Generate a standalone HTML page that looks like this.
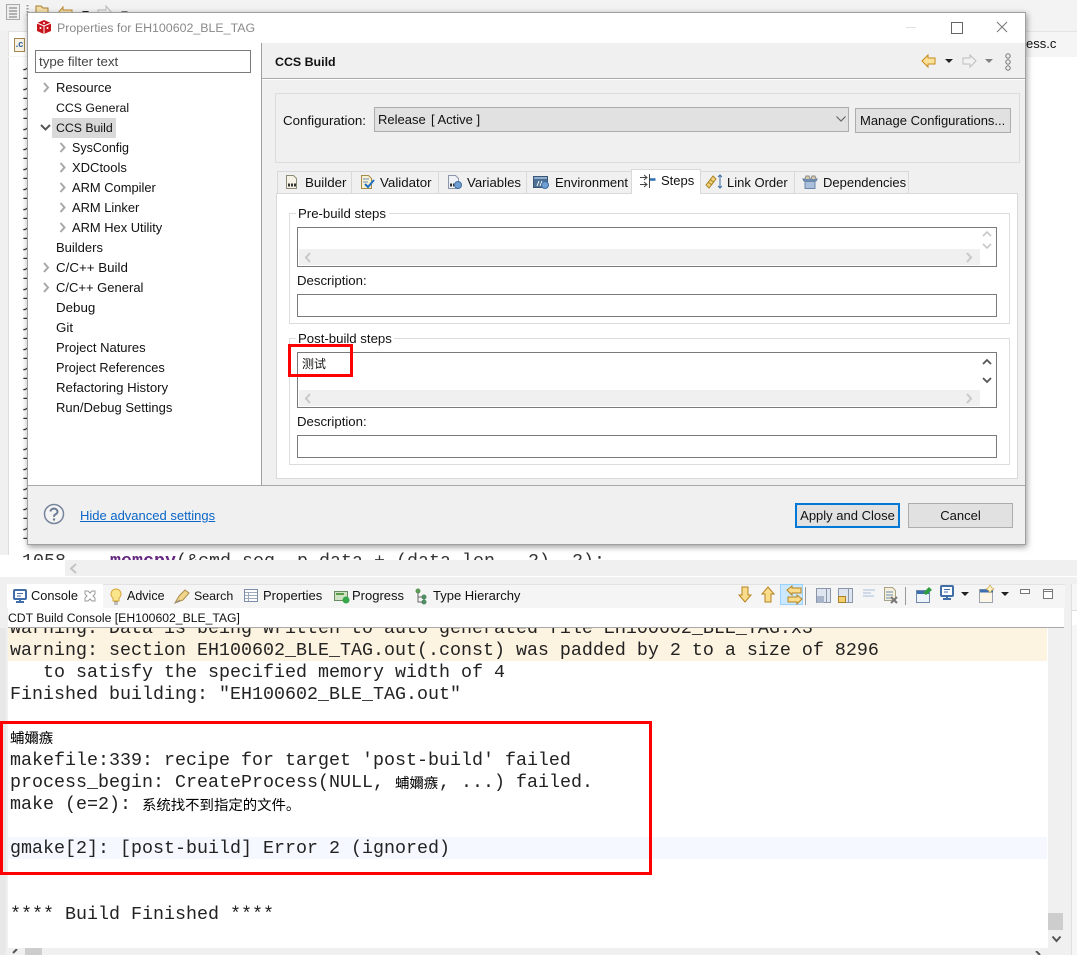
<!DOCTYPE html>
<html><head><meta charset="utf-8"><style>
html,body{margin:0;padding:0;width:1077px;height:955px;overflow:hidden;background:#fff}
body{position:relative;font-family:"Liberation Sans","Noto Sans CJK SC",sans-serif;font-size:13px;color:#111}
div,span.t,svg{position:absolute}
.t{position:absolute;white-space:nowrap;line-height:16px}
.box{box-sizing:border-box;background:#fff;border:1px solid #7a7a7a}
.m{position:absolute;left:10px;white-space:pre;height:22px;line-height:22px;font-family:"Liberation Mono","Noto Sans CJK SC",monospace;font-size:18.33px;color:#222}
.z{font-family:"Noto Sans CJK SC",sans-serif;font-size:14.4px;display:inline-block;color:#000;line-height:22px;vertical-align:top}
.g{background:#f0f0f0}
.tab{box-sizing:border-box;top:171px;height:22px;background:#f0f0f0;border:1px solid #d9d9d9;border-bottom:0}
.red{box-sizing:border-box;border:3px solid #f00}
</style></head><body>

<!-- background workbench -->
<div class="g" style="left:0;top:0;width:1077px;height:31px;background:#f3f3f3"></div>
<svg style="left:6px;top:4px" width="14" height="17"><rect x=".5" y=".5" width="13" height="15" fill="#eee" stroke="#aaa"/><path d="M3 4h8M3 7h8M3 10h8M3 13h8" stroke="#777"/></svg>
<svg style="left:26px;top:4px" width="4" height="14"><path d="M1.5 1v12" stroke="#999" stroke-dasharray="1.5 1.5" stroke-width="2"/></svg>
<svg style="left:33px;top:3px" width="100" height="10"><path d="M3 10V3h5l2 2h5v5" fill="#f4dfa8" stroke="#a87c2c"/><path d="M25 10l5-6v3h9v3" fill="#f7e0ae" stroke="#b98a2f"/><path d="M49 8l7 0-3.500 4z" fill="#222"/><path d="M65 10V7h8V3l6 7" fill="#f3f3f3" stroke="#bbb"/><path d="M88 8h7l-3.500 4z" fill="#777"/></svg>
<div style="left:0;top:31px;width:8px;height:524px;background:#f0f0f0;border-right:1px solid #ddd"></div>
<div style="left:8px;top:31px;width:1069px;height:25px;background:#f5f5f5;border-top:1px solid #e4e4e4"></div>
<div style="left:8px;top:31px;width:30px;height:25px;background:#fff;border:1px solid #e2e2e2;border-bottom:0;box-sizing:border-box"></div>
<div style="left:14px;top:38px;width:9px;height:12px;border:1px solid #a58a50;background:#f7f2e4;color:#2a5b9c;font:bold 9px/11px 'Liberation Sans';text-align:center">.c</div>
<span class="t" style="left:1026px;top:36px">ess.c</span>
<div style="left:22px;top:65px;width:6px;height:480px;color:#333;font:18.33px/20px 'Liberation Mono';overflow:hidden">1<br>1<br>1<br>1<br>1<br>1<br>1<br>1<br>1<br>1<br>1<br>1<br>1<br>1<br>1<br>1<br>1<br>1<br>1<br>1<br>1<br>1<br>1<br>1</div>
<div style="left:22px;top:545px;width:640px;height:15px;overflow:hidden"><div style="left:0;top:7px;white-space:pre;font:18.33px/20px 'Liberation Mono';color:#333;width:640px">1058<span style="color:#fff">    </span><b style="color:#642880">memcpy</b>(&amp;cmd_seq, p_data + (data_len - 2), 2);</div></div>
<div class="g" style="left:65px;top:560px;width:1012px;height:16px"></div>
<svg style="left:69px;top:563px" width="10" height="11"><path d="M7 1L2 5.500 7 10" fill="none" stroke="#c4c4c4" stroke-width="2"/></svg>
<div style="left:0;top:576px;width:1077px;height:7px;background:#fff;border-bottom:1px solid #e8e8e8"></div>
<div class="g" style="left:0;top:577px;width:1077px;height:378px;background:#f0f0f0"></div>

<!-- console view -->
<div style="left:7px;top:584px;width:1058px;height:24px;background:#f5f5f5;border-top:1px solid #e2e2e2"></div>
<div style="left:7px;top:584px;width:96px;height:24px;background:#fff"></div>
<div style="left:8px;top:608px;width:1056px;height:340px;background:#fff"></div>
<svg style="left:13px;top:589px" width="14" height="15"><rect x="1" y="1" width="12" height="9" rx="1" fill="#fff" stroke="#3f6ea8" stroke-width="2"/><path d="M4 4.500h6M4 7h4" stroke="#3f6ea8"/><path d="M3 13h8M7 10v3" stroke="#3f6ea8" stroke-width="2"/></svg>
<span class="t" style="left:31px;top:588px;font-size:12.8px">Console</span>
<svg style="left:84px;top:590px" width="12" height="12"><path d="M1 1l3 0 2 2 2-2 3 0 0 3-2 2 2 2 0 3-3 0-2-2-2 2-3 0 0-3 2-2-2-2z" fill="#fff" stroke="#999"/></svg>
<svg style="left:109px;top:588px" width="14" height="17"><path d="M7 1a5 5 0 0 1 3 9v3H4v-3A5 5 0 0 1 7 1z" fill="#fbe58a" stroke="#d3a63a"/><path d="M5 14h4M5 16h4" stroke="#8a8a8a"/></svg>
<span class="t" style="left:127px;top:588px;font-size:12.5px">Advice</span>
<svg style="left:174px;top:588px" width="17" height="16"><path d="M1 15l4-7 6-6 4 3-6 7z" fill="#f0d58a" stroke="#a88a48"/><path d="M1 15l5-3" stroke="#888"/></svg>
<span class="t" style="left:194px;top:588px;font-size:12.4px">Search</span>
<svg style="left:244px;top:589px" width="14" height="13"><rect x=".5" y=".5" width="13" height="12" fill="#fff" stroke="#7d8ea8"/><path d="M1 3.500h12M1 6.500h12M1 9.500h12M4.500 3v9" stroke="#9caabd"/></svg>
<span class="t" style="left:263px;top:588px">Properties</span>
<svg style="left:334px;top:590px" width="16" height="14"><rect x=".5" y="1.500" width="13" height="9" fill="#cfe3c2" stroke="#6a8a64"/><rect x="2" y="3" width="8" height="2" fill="#5a9c4a"/><circle cx="12" cy="10" r="3.500" fill="#36a84a"/></svg>
<span class="t" style="left:352px;top:588px">Progress</span>
<svg style="left:415px;top:588px" width="13" height="17"><circle cx="3" cy="3" r="2.500" fill="#5d9a56"/><circle cx="9" cy="9" r="2.500" fill="#4f8f63"/><circle cx="9" cy="14" r="2.500" fill="#4f8f63"/><path d="M3 4v10h5M3 9h5" stroke="#666" fill="none"/></svg>
<span class="t" style="left:433px;top:588px">Type Hierarchy</span>

<!-- console toolbar -->
<div style="left:780px;top:584px;width:23px;height:21px;box-sizing:border-box;background:#cce8ff;border:1px solid #99d1ff"></div>
<svg style="left:735px;top:584px" width="330" height="22">
<path d="M7 3h6v8h3l-6 7-6-7h3z" fill="#f9dc8c" stroke="#b5831f"/>
<path d="M30 18h6v-8h3l-6-7-6 7h3z" fill="#f9dc8c" stroke="#b5831f"/>
<path d="M52 6l5-4v2h9v5h-9v2zM67 15l-5-4v2h-9v5h9v2z" fill="#f9dc8c" stroke="#b5831f" transform="translate(0 0)"/>
<path d="M70.500 3v18M170.500 3v18" stroke="#999"/>
<rect x="81.500" y="4.500" width="14" height="14" fill="#dfe5ee" stroke="#8a97ab"/><path d="M91.500 5v13" stroke="#8a97ab"/><rect x="82" y="12" width="7" height="7" fill="#a8b4c8"/>
<rect x="103.500" y="4.500" width="14" height="14" fill="#dfe5ee" stroke="#8a97ab"/><path d="M113.500 5v13" stroke="#8a97ab"/><rect x="103.500" y="12.500" width="7" height="6" fill="#f3cf6e" stroke="#a98326"/>
<path d="M128 6h12M128 9h8M128 12h11" stroke="#a9bfdc" fill="none"/>
<path d="M149.500 3.500h8l3 3v10h-11z" fill="#f6efd8" stroke="#a9a28a"/><path d="M151 8h7M151 11h7M151 14h5" stroke="#6a8fc0"/><path d="M156 13l6 6M162 13l-6 6" stroke="#777" stroke-width="2"/>
<rect x="181.500" y="6.500" width="13" height="12" fill="#eef3f9" stroke="#6f89a8"/><path d="M182 8.500h12" stroke="#3d6fb0" stroke-width="3"/><path d="M188 9l6-6 3 3-6 5z" fill="#2e9e42"/>
<rect x="206" y="2" width="12" height="10" rx="1" fill="#fff" stroke="#3f6ea8" stroke-width="2"/><path d="M209 5.500h6M209 8h4" stroke="#3f6ea8"/><path d="M208 15h8M212 12v3" stroke="#3f6ea8" stroke-width="2"/>
<path d="M226 8h8l-4 4z" fill="#222"/>
<rect x="244.500" y="5.500" width="13" height="13" fill="#fbf6e6" stroke="#9aa4b0"/><path d="M245 7h13" stroke="#3d6fb0" stroke-width="3"/><path d="M255 1l1.500 2.500L259 5l-2.500 1.500L255 9l-1.500-2.500L251 5l2.500-1.500z" fill="#fff3c0" stroke="#c5a24a" stroke-width=".7"/>
<path d="M266 8h8l-4 4z" fill="#222"/>
<rect x="285.500" y="5.500" width="9" height="4" fill="#fff" stroke="#777"/>
<rect x="308.500" y="5.500" width="9" height="9" fill="#fff" stroke="#777"/><path d="M308 7.500h10" stroke="#777"/>
</svg>

<span class="t" style="left:8px;top:610px;font-size:12.2px">CDT Build Console [EH100602_BLE_TAG]</span>
<div style="left:8px;top:627px;width:1056px;height:1px;background:#a8a8a8"></div>

<div style="left:0;top:628px;width:1047px;height:320px;overflow:hidden">
<div style="left:8px;top:0;width:1039px;height:33px;background:#fdf3e1"></div>
<div style="left:8px;top:209px;width:1039px;height:22px;background:#f5f8ff"></div>
<div class="m" style="top:-10px">warning: Data is being written to auto generated file EH100602_BLE_TAG.x3</div>
<div class="m" style="top:12px">warning: section EH100602_BLE_TAG.out(.const) was padded by 2 to a size of 8296</div>
<div class="m" style="top:34px">   to satisfy the specified memory width of 4</div>
<div class="m" style="top:56px">Finished building: "EH100602_BLE_TAG.out"</div>
<div class="m" style="top:99px"><span class="z">蜅嬭瘯</span></div>
<div class="m" style="top:122px">makefile:339: recipe for target 'post-build' failed</div>
<div class="m" style="top:144px">process_begin: CreateProcess(NULL, <span class="z" style="width:44px">蜅嬭瘯</span>, ...) failed.</div>
<div class="m" style="top:166px">make (e=2): <span class="z">系统找不到指定的文件。</span></div>
<div class="m" style="top:210px">gmake[2]: [post-build] Error 2 (ignored)</div>
<div class="m" style="top:276px">**** Build Finished ****</div>
</div>

<div style="left:0;top:628px;width:6px;height:327px;background:#e8e8e8"></div>
<!-- console scrollbars -->
<div class="g" style="left:1048px;top:628px;width:16px;height:320px"></div>
<div style="left:1048px;top:913px;width:15px;height:17px;background:#cdcdcd"></div>
<svg style="left:1051px;top:935px" width="11" height="9"><path d="M1.500 1.500L5.500 6l4-4.500" fill="none" stroke="#555" stroke-width="2"/></svg>
<div class="g" style="left:8px;top:948px;width:1056px;height:7px"></div>
<div style="left:25px;top:948px;width:17px;height:7px;background:#cdcdcd"></div>
<svg style="left:11px;top:949px" width="8" height="6"><path d="M6 0L2 4" stroke="#555" stroke-width="2"/></svg>
<svg style="left:1034px;top:951px" width="8" height="4"><path d="M2 0l4 4" stroke="#555" stroke-width="2"/></svg>
<div style="left:1071px;top:584px;width:6px;height:371px;background:#f6f6f6;border-left:1px solid #e0e0e0;box-sizing:border-box"></div>
<div style="left:1072px;top:610px;width:5px;height:14px;background:#fff;border-top:1px solid #ddd"></div>

<!-- dialog -->
<div style="left:27px;top:12px;width:999px;height:533px;background:#fff;box-sizing:border-box;border:1px solid #a0a0a0;box-shadow:1px 2px 6px rgba(0,0,0,.4)"></div>
<svg style="left:36px;top:19px" width="16" height="16"><path d="M8 1l7 3v8l-7 3-7-3V4z" fill="#c8141c"/><path d="M1 4l7 3 7-3M8 7v8" stroke="#fff" fill="none"/><circle cx="8" cy="4" r="1" fill="#fff"/><circle cx="4.500" cy="9" r="1" fill="#fff"/><circle cx="11.500" cy="9" r="1" fill="#fff"/></svg>
<span class="t" style="left:57px;top:20px;color:#8a8a8a;font-size:12.4px">Properties for EH100602_BLE_TAG</span>
<div style="left:906px;top:27px;width:10px;height:1px;background:#e0e0e0"></div>
<div style="left:951px;top:22px;width:10px;height:10px;border:1px solid #666"></div>
<svg style="left:996px;top:21px" width="12" height="12"><path d="M1 1l10 10M11 1L1 11" stroke="#777" fill="none"/></svg>

<!-- left tree -->
<div class="box" style="left:35px;top:50px;width:216px;height:23px"></div>
<span class="t" style="left:39px;top:54px;color:#444;font-size:13.33px">type filter text</span>
<div style="left:52px;top:118px;width:64px;height:20px;background:#d9d9d9"></div>
<span class="t" style="left:56px;top:80px">Resource</span>
<span class="t" style="left:56px;top:100px;font-size:12.3px">CCS General</span>
<span class="t" style="left:56px;top:120px;font-size:12.3px">CCS Build</span>
<span class="t" style="left:72px;top:140px;font-size:12.5px">SysConfig</span>
<span class="t" style="left:72px;top:160px">XDCtools</span>
<span class="t" style="left:72px;top:180px;font-size:12.9px">ARM Compiler</span>
<span class="t" style="left:72px;top:200px;font-size:12.9px">ARM Linker</span>
<span class="t" style="left:72px;top:220px;font-size:12.9px">ARM Hex Utility</span>
<span class="t" style="left:56px;top:240px">Builders</span>
<span class="t" style="left:56px;top:260px;font-size:13.33px">C/C++ Build</span>
<span class="t" style="left:56px;top:280px">C/C++ General</span>
<span class="t" style="left:56px;top:300px;font-size:13.33px">Debug</span>
<span class="t" style="left:56px;top:320px;font-size:13.33px">Git</span>
<span class="t" style="left:56px;top:340px">Project Natures</span>
<span class="t" style="left:56px;top:360px;font-size:12.8px">Project References</span>
<span class="t" style="left:56px;top:380px;font-size:13.2px">Refactoring History</span>
<span class="t" style="left:56px;top:400px">Run/Debug Settings</span>
<svg style="left:40px;top:80px" width="30" height="220" fill="none" stroke="#a8a8a8" stroke-width="2">
<path d="M4 3l4 4.500-4 4.500"/>
<path d="M20.500 63l4 4.500-4 4.500M20.500 83l4 4.500-4 4.500M20.500 103l4 4.500-4 4.500M20.500 123l4 4.500-4 4.500M20.500 143l4 4.500-4 4.500"/>
<path d="M4 183l4 4.500-4 4.500M4 203l4 4.500-4 4.500"/>
<path d="M1 45l4.500 4.500L10 45" stroke="#555"/>
</svg>

<!-- right pane -->
<div class="g" style="left:262px;top:43px;width:763px;height:442px"></div>
<div style="left:261px;top:43px;width:1px;height:442px;background:#a0a0a0"></div>
<span class="t" style="left:275px;top:54px;font-weight:bold;color:#111;font-size:12.4px">CCS Build</span>
<div style="left:262px;top:78px;width:763px;height:1px;background:#a8a8a8"></div>
<div style="left:262px;top:79px;width:763px;height:1px;background:#fff"></div>
<svg style="left:920px;top:52px" width="95" height="20">
<path d="M2 9l6-6v3h7v6H8v3z" fill="#fbe29a" stroke="#c8891d"/>
<path d="M25 7h8l-4 4z" fill="#222"/>
<path d="M56 9l-6-6v3h-7v6h7v3z" fill="#f2f2f2" stroke="#bdbdbd"/>
<path d="M65 7h8l-4 4z" fill="#808080"/>
<circle cx="88" cy="4" r="2.200" fill="#eee" stroke="#777"/><circle cx="88" cy="10" r="2.200" fill="#eee" stroke="#777"/><circle cx="88" cy="16" r="2.200" fill="#eee" stroke="#777"/>
</svg>

<div style="left:275px;top:93px;width:745px;height:70px;box-sizing:border-box;border:1px solid #dcdcdc"></div>
<span class="t" style="left:283px;top:113px;font-size:13.33px">Configuration:</span>
<div style="left:374px;top:107px;width:475px;height:25px;box-sizing:border-box;background:#e1e1e1;border:1px solid #adadad"></div>
<span class="t" style="left:378px;top:112px">Release</span>
<span class="t" style="left:431px;top:112px">[ Active ]</span>
<svg style="left:835px;top:115px" width="12" height="9"><path d="M1.500 1.500L6 6l4.500-4.500" fill="none" stroke="#666" stroke-width="1.200"/></svg>
<div style="left:855px;top:108px;width:156px;height:25px;box-sizing:border-box;background:#e1e1e1;border:1px solid #adadad"></div>
<span class="t" style="left:860px;top:113px;color:#111">Manage Configurations...</span>

<!-- tabs -->
<div style="left:276px;top:193px;width:742px;height:286px;box-sizing:border-box;background:#fff;border:1px solid #d9d9d9"></div>
<div class="tab" style="left:277px;width:75px"></div>
<div class="tab" style="left:351px;width:88px"></div>
<div class="tab" style="left:438px;width:89px"></div>
<div class="tab" style="left:526px;width:106px"></div>
<div class="tab" style="left:631px;top:169px;width:70px;height:25px;background:#fff"></div>
<div class="tab" style="left:700px;width:95px"></div>
<div class="tab" style="left:794px;width:115px"></div>
<span class="t" style="left:305px;top:175px;font-size:13.33px">Builder</span>
<span class="t" style="left:380px;top:175px;font-size:13.33px">Validator</span>
<span class="t" style="left:467px;top:175px;font-size:13.2px">Variables</span>
<span class="t" style="left:555px;top:175px">Environment</span>
<span class="t" style="left:661px;top:173px">Steps</span>
<span class="t" style="left:727px;top:175px">Link Order</span>
<span class="t" style="left:823px;top:175px">Dependencies</span>
<svg style="left:284px;top:174px" width="16" height="16"><path d="M2.500 1.500h7l3 3v10h-10z" fill="#f6f3e6" stroke="#8d8a78"/><path d="M4 11h9" stroke="#333" stroke-width="3" stroke-dasharray="2 1"/></svg>
<svg style="left:359px;top:174px" width="17" height="16"><path d="M2.500 1.500h7l3 3v10h-10z" fill="#f8f0d2" stroke="#a58c4b"/><path d="M4 5h6M4 8h5" stroke="#6a8fc0"/><path d="M6 10l3 3 6-7" fill="none" stroke="#1f6fc0" stroke-width="2"/></svg>
<svg style="left:446px;top:174px" width="17" height="16"><path d="M2.500 1.500h7l3 3v10h-10z" fill="#eef1f6" stroke="#8d96a8"/><path d="M4 11h4" stroke="#333" stroke-width="3" stroke-dasharray="2 1"/><circle cx="12" cy="11" r="3.500" fill="#6f9fd0" stroke="#3c6da2"/></svg>
<svg style="left:533px;top:174px" width="17" height="16"><rect x=".5" y="2.500" width="14" height="11" fill="#4e6f94" stroke="#3a5575"/><rect x="1" y="3" width="13" height="2" fill="#8faccb"/><path d="M4 12l2-5M7 12l2-5" stroke="#fff"/><circle cx="12" cy="11" r="3.500" fill="#6f9fd0" stroke="#3c6da2"/></svg>
<svg style="left:640px;top:173px" width="16" height="16"><path d="M0 4.500h7M4 2l3 2.500L4 7M9.500 1v7M0 11.500h7M4 9l3 2.500L4 14M9.500 8v7" stroke="#444" fill="none"/><path d="M10 6.500h5.500" stroke="#2a6fb0" stroke-width="2.500"/></svg>
<svg style="left:705px;top:174px" width="17" height="16"><path d="M1 11l7-9 3 3-7 9z" fill="#efd27b" stroke="#a98326"/><path d="M3 8l4 3M5 5.500l4 3" stroke="#a98326"/><path d="M15 1v13M13 3l2-2 2 2M13 12l2 2 2-2" stroke="#3d6ca8" fill="none"/></svg>
<svg style="left:802px;top:175px" width="16" height="14"><path d="M1 4h14l-1 2H2z" fill="#7e9fc6" stroke="#5a7899"/><rect x="3" y="6.500" width="10" height="7" fill="#a9bfdc" stroke="#6d87a8"/><path d="M3 4l1-3h3l1 3M9 4l1-3h3l1 3" fill="#d8c9a8" stroke="#8a8a8a"/></svg>

<!-- groups -->
<div style="left:289px;top:213px;width:721px;height:111px;box-sizing:border-box;border:1px solid #dcdcdc"></div>
<div style="left:296px;top:206px;width:93px;height:15px;background:#fff"></div>
<span class="t" style="left:298px;top:206px;font-size:13.2px">Pre-build steps</span>
<div class="box" style="left:297px;top:227px;width:700px;height:40px"></div>
<div class="g" style="left:299px;top:249px;width:681px;height:16px"></div>
<svg style="left:303px;top:251px" width="678" height="13"><path d="M7 2L3 6.500 7 11" fill="none" stroke="#c8c8c8" stroke-width="2"/><path d="M664 2l4 4.500-4 4.500" fill="none" stroke="#c8c8c8" stroke-width="2"/></svg>
<svg style="left:981px;top:230px" width="12" height="20"><path d="M2 6l4-4 4 4M2 14l4 4 4-4" fill="none" stroke="#c8c8c8" stroke-width="1.600"/></svg>
<span class="t" style="left:297px;top:273px;font-size:13.2px">Description:</span>
<div class="box" style="left:297px;top:294px;width:700px;height:23px"></div>

<div style="left:289px;top:338px;width:721px;height:127px;box-sizing:border-box;border:1px solid #dcdcdc"></div>
<div style="left:296px;top:331px;width:98px;height:15px;background:#fff"></div>
<span class="t" style="left:298px;top:331px;font-size:13.2px">Post-build steps</span>
<div class="box" style="left:297px;top:352px;width:700px;height:56px"></div>
<span class="t" style="left:302px;top:356px;font-size:12px;font-family:'Noto Sans CJK SC',sans-serif">测试</span>
<div class="g" style="left:299px;top:390px;width:681px;height:16px"></div>
<svg style="left:303px;top:392px" width="678" height="13"><path d="M7 2L3 6.500 7 11" fill="none" stroke="#c8c8c8" stroke-width="2"/><path d="M664 2l4 4.500-4 4.500" fill="none" stroke="#c8c8c8" stroke-width="2"/></svg>
<svg style="left:981px;top:356px" width="12" height="30"><path d="M2 8l4-4 4 4M2 22l4 4 4-4" fill="none" stroke="#555" stroke-width="1.800"/></svg>
<span class="t" style="left:297px;top:414px;font-size:13.2px">Description:</span>
<div class="box" style="left:297px;top:435px;width:700px;height:23px"></div>

<!-- footer -->
<div class="g" style="left:28px;top:485px;width:997px;height:59px;border-top:1px solid #a8a8a8;box-sizing:border-box"></div>
<svg style="left:43px;top:503px" width="22" height="22"><circle cx="11" cy="11" r="9.500" fill="#f4f4f4" stroke="#76849c" stroke-width="1.500"/><path d="M7.500 8.500a3.500 3 0 1 1 5 2.800c-1 .6-1.500 1-1.500 2.400" fill="none" stroke="#6c7a92" stroke-width="2"/><circle cx="11" cy="16.500" r="1.200" fill="#6c7a92"/></svg>
<span class="t" style="left:80px;top:508px;color:#0a66c8;text-decoration:underline">Hide advanced settings</span>
<div style="left:795px;top:503px;width:105px;height:25px;box-sizing:border-box;background:#e1e1e1;border:2px solid #0078d7"></div>
<span class="t" style="left:795px;top:508px;width:105px;text-align:center">Apply and Close</span>
<div style="left:908px;top:503px;width:105px;height:25px;box-sizing:border-box;background:#e1e1e1;border:1px solid #adadad"></div>
<span class="t" style="left:908px;top:508px;width:105px;text-align:center">Cancel</span>

<!-- annotations -->
<div class="red" style="left:288px;top:344px;width:65px;height:33px"></div>
<div class="red" style="left:0;top:721px;width:652px;height:154px"></div>
</body></html>
